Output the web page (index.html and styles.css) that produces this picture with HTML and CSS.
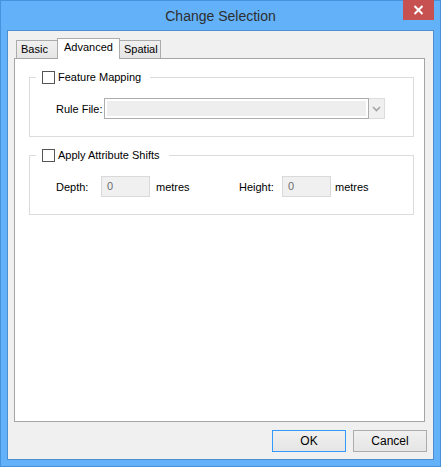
FILE: index.html
```html
<!DOCTYPE html>
<html lang="en">
<head>
    <meta charset="UTF-8">
    <title>Change Selection</title>
    <link rel="stylesheet" href="styles.css">
</head>
<body>
    <div class="window">
        <div class="titlebar">
            <span class="title">Change Selection</span>
            <div class="close">
                <svg width="11" height="10" viewBox="0 0 11 10">
                    <path d="M1.5 1 L9.5 9 M9.5 1 L1.5 9" stroke="#fff" stroke-width="2"/>
                </svg>
            </div>
        </div>
        <div class="client">
            <div class="tabs">
                <div class="tab tab-basic">Basic</div>
                <div class="tab tab-adv active">Advanced</div>
                <div class="tab tab-spatial">Spatial</div>
            </div>
            <div class="panel">
                <!-- feature mapping -->
                <fieldset class="group">
                    <legend><span class="check"></span>Feature Mapping</legend>
                    <div class="row">
                        <span class="lbl lbl-rule">Rule File:</span>
                        <div class="combo">
                            <div class="combo-field"></div>
                            <div class="combo-btn">
                                <svg width="9" height="6" viewBox="0 0 9 6">
                                    <path d="M1 1 L4.5 4.5 L8 1" fill="none" stroke="#a6a6a6" stroke-width="1.6"/>
                                </svg>
                            </div>
                        </div>
                    </div>
                </fieldset>
                <!-- attribute shifts -->
                <fieldset class="group group-shift">
                    <legend><span class="check"></span>Apply Attribute Shifts</legend>
                    <div class="row">
                        <span class="lbl lbl-depth">Depth:</span>
                        <div class="num">0</div>
                        <span class="unit unit-depth">metres</span>
                        <span class="lbl lbl-height">Height:</span>
                        <div class="num">0</div>
                        <span class="unit unit-height">metres</span>
                    </div>
                </fieldset>
            </div>
            <div class="buttons">
                <div class="btn btn-ok">OK</div>
                <div class="btn">Cancel</div>
            </div>
        </div>
    </div>
</body>
</html>
```

FILE: styles.css
```css
body{
    margin: 0;
    font-family: "Liberation Sans", Arial, sans-serif;
    font-size: 11px;
    color: #000;
}
.window{
    box-sizing: border-box;
    width: 441px;
    height: 467px;
    border: 1px solid #4593dd;
    background: #63b1f8;
    padding: 0 6px 6px 6px;
    display: flex;
    flex-direction: column;
}
.titlebar{
    position: relative;
    height: 29px;
    display: flex;
    align-items: center;
    justify-content: center;
}
.title{
    font-size: 14px;
    color: #2e2e2e;
    margin-top: 1px;
}
.close{
    position: absolute;
    top: -1px;
    right: 0;
    width: 31px;
    height: 20px;
    background: #c75050;
    display: flex;
    align-items: center;
    justify-content: center;
}
.client{
    flex: 1;
    border: 1px solid #4c8fd0;
    background: #f0f0f0;
    padding: 7px 8px 7px 6px;
    display: flex;
    flex-direction: column;
}
.tabs{
    display: flex;
    align-items: flex-end;
    padding-left: 2px;
}
.tab{
    box-sizing: border-box;
    height: 18px;
    border: 1px solid #acacac;
    border-bottom: none;
    background: linear-gradient(#f0f0f0, #e5e5e5);
    line-height: 17px;
    padding-left: 4px;
}
.tab-basic{ width: 42px; }
.tab-adv{ width: 63px; margin-left: -1px; padding-left: 6px; }
.tab-spatial{ width: 42px; margin-left: -1px; }
.tab.active{
    position: relative;
    z-index: 1;
    height: 21px;
    margin-bottom: -1px;
    background: #fff;
    line-height: 17px;
}
.panel{
    flex: 1;
    background: #fff;
    border: 1px solid #a5a5a5;
    padding: 12px 10px 0 14px;
}
.group{
    margin: 0;
    padding: 0 0 17px 0;
    border: 1px solid #dcdcdc;
}
.group-shift{
    margin-top: 12px;
}
.group legend{
    margin-left: 6px;
    padding: 0 9px 0 6px;
    height: 13px;
    line-height: 13px;
    display: flex;
    align-items: center;
}
.check{
    box-sizing: border-box;
    width: 13px;
    height: 13px;
    border: 1px solid #555;
    background: #fff;
    margin-right: 3px;
}
.row{
    display: flex;
    align-items: center;
    margin-top: 14px;
    padding-left: 26px;
}
.lbl-rule{ width: 48px; }
.combo{
    display: flex;
}
.combo-field{
    box-sizing: border-box;
    width: 265px;
    height: 21px;
    border: 1px solid #adadad;
    background: #eeeeee;
    box-shadow: inset 0 0 0 2px #fff;
}
.combo-btn{
    box-sizing: border-box;
    width: 16px;
    height: 21px;
    border: 1px solid #dcdcdc;
    border-left: none;
    background: #f0f0f0;
    display: flex;
    align-items: center;
    justify-content: center;
}
.lbl-depth{ width: 45px; }
.lbl-height{ width: 43px; }
.num{
    box-sizing: border-box;
    width: 49px;
    height: 21px;
    border: 1px solid #d9d9d9;
    background: #f0f0f0;
    color: #6d6d6d;
    line-height: 19px;
    padding-left: 5px;
}
.unit-depth{ width: 83px; margin-left: 6px; }
.unit-height{ margin-left: 4px; }
.buttons{
    display: flex;
    justify-content: flex-end;
    gap: 7px;
    margin-top: 8px;
    margin-right: -2px;
}
.btn{
    box-sizing: border-box;
    width: 74px;
    height: 22px;
    border: 1px solid #acacac;
    background: linear-gradient(#f0f0f0, #e5e5e5);
    text-align: center;
    line-height: 20px;
    font-size: 12px;
}
.btn-ok{
    border-color: #3399ff;
}
```
